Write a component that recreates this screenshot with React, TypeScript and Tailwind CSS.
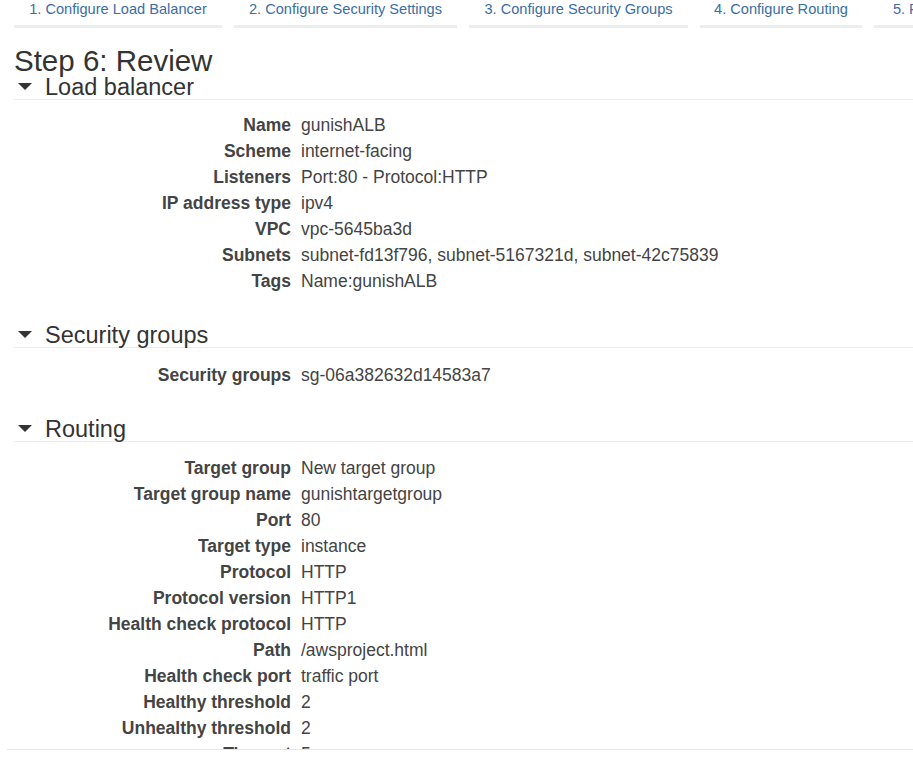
import React from "react";

const tabs = [
  { label: "1. Configure Load Balancer", w: "w-[208px]" },
  { label: "2. Configure Security Settings", w: "w-[223px]" },
  { label: "3. Configure Security Groups", w: "w-[219px]" },
  { label: "4. Configure Routing", w: "w-[162px]" },
  { label: "5. Register Targets", w: "w-[160px]" },
];

type Row = [string, string];

const sections: { title: string; pt: string; rows: Row[] }[] = [
  {
    title: "Load balancer",
    pt: "pt-[12px]",
    rows: [
      ["Name", "gunishALB"],
      ["Scheme", "internet-facing"],
      ["Listeners", "Port:80 - Protocol:HTTP"],
      ["IP address type", "ipv4"],
      ["VPC", "vpc-5645ba3d"],
      ["Subnets", "subnet-fd13f796, subnet-5167321d, subnet-42c75839"],
      ["Tags", "Name:gunishALB"],
    ],
  },
  {
    title: "Security groups",
    pt: "pt-[14px]",
    rows: [["Security groups", "sg-06a382632d14583a7"]],
  },
  {
    title: "Routing",
    pt: "pt-[13px]",
    rows: [
      ["Target group", "New target group"],
      ["Target group name", "gunishtargetgroup"],
      ["Port", "80"],
      ["Target type", "instance"],
      ["Protocol", "HTTP"],
      ["Protocol version", "HTTP1"],
      ["Health check protocol", "HTTP"],
      ["Path", "/awsproject.html"],
      ["Health check port", "traffic port"],
      ["Healthy threshold", "2"],
      ["Unhealthy threshold", "2"],
      ["Timeout", "5"],
      ["Interval", "30"],
      ["Success codes", "200"],
    ],
  },
];

function Caret() {
  return (
    <svg width="14" height="8" viewBox="0 0 14 8" className="shrink-0">
      <polygon points="0,0 14,0 7,7" fill="#333333" />
    </svg>
  );
}

export default function App() {
  return (
    <div className="w-[913px] h-[776px] overflow-hidden bg-white font-['Liberation_Sans',Arial,sans-serif] text-[#444444]">
      <div className="ml-[7px] w-[906px] h-[750px] overflow-hidden border-b border-[#e6e8e8]">
        <div className="pl-[7px]">
          <div className="flex gap-[12px] whitespace-nowrap">
            {tabs.map((t) => (
              <div
                key={t.label}
                className={`${t.w} shrink-0 text-center text-[14.6px] leading-[18px] pb-[7px] text-[#3a6ea5] border-b-[3px] border-[#eceeee]`}
              >
                {t.label}
              </div>
            ))}
          </div>
          <h1 className="mt-[18px] text-[29.5px] leading-[30px] text-[#333333] font-normal">
            Step 6: Review
          </h1>
          {sections.map((s, i) => (
            <div key={s.title} className={i === 0 ? "-mt-[1px]" : "mt-[29px]"}>
              <div className="flex items-center h-[24px] border-b border-[#eaeded] box-content">
                <div className="w-[31px] pl-[4px] flex items-center">
                  <Caret />
                </div>
                <span className="text-[23.5px] leading-[24px] text-[#333333]">{s.title}</span>
              </div>
              <div className={s.pt}>
                {s.rows.map(([k, v]) => (
                  <div key={k} className="grid grid-cols-[277px_1fr] gap-x-[10px] h-[26px] items-center text-[17.5px] leading-[26px] whitespace-nowrap">
                    <div className="text-right font-bold">{k}</div>
                    <div>{v}</div>
                  </div>
                ))}
              </div>
            </div>
          ))}
        </div>
      </div>
    </div>
  );
}
